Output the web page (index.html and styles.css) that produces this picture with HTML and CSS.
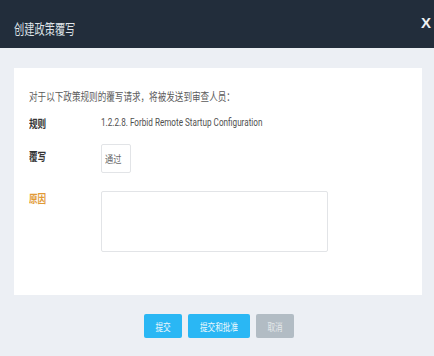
FILE: index.html
```html
<!DOCTYPE html>
<html lang="zh">
<head>
<meta charset="utf-8">
<link rel="stylesheet" href="styles.css">
</head>
<body>
<div class="dialog">
  <header class="head">
    <span class="title sx">创建政策覆写</span>
    <span class="close">X</span>
  </header>
  <main class="body">
    <section class="card">
      <p class="intro"><span class="sx">对于以下政策规则的覆写请求，将被发送到审查人员：</span></p>
      <div class="row row-rule">
        <div class="label"><span class="sx">规则</span></div>
        <div class="value"><span class="sx">1.2.2.8. Forbid Remote Startup Configuration</span></div>
      </div>
      <div class="row row-over">
        <div class="label"><span class="sx">覆写</span></div>
        <div class="select"><span class="sx">通过</span></div>
      </div>
      <div class="row row-reason">
        <div class="label warn"><span class="sx">原因</span></div>
        <div class="textarea"></div>
      </div>
    </section>
    <div class="actions">
      <button class="btn primary w38"><span class="sxc">提交</span></button>
      <button class="btn primary w62"><span class="sxc">提交和批准</span></button>
      <button class="btn muted w38"><span class="sxc">取消</span></button>
    </div>
  </main>
</div>
</body>
</html>
```
FILE: styles.css
```css
* { box-sizing: border-box; }
html, body { margin: 0; padding: 0; }
body {
  width: 434px;
  height: 356px;
  overflow: hidden;
  background: #eceff4;
  font-family: Roboto, "Noto Sans CJK SC", sans-serif;
}
.sx {
  display: inline-block;
  white-space: nowrap;
  transform: scaleX(0.78);
  transform-origin: 0 50%;
}
.sxc {
  display: inline-block;
  white-space: nowrap;
  transform: scaleX(0.76);
  transform-origin: 50% 50%;
}
.head {
  height: 48px;
  background: #222d3b;
  display: flex;
  align-items: center;
  justify-content: space-between;
  padding: 0 3px 0 14px;
  color: #e6e9ee;
  font-family: "Noto Sans CJK SC", sans-serif;
}
.title {
  font-size: 14px;
  transform: scaleX(0.73);
  margin-top: 8px;
  color: #dfe3e8;
}
.close {
  font-size: 15px;
  font-weight: bold;
  color: #eef0f3;
  margin-top: -4px;
  font-family: "Liberation Sans", Arial, sans-serif;
}
.body {
  padding: 20px 12px 0 14px;
}
.card {
  background: #fff;
  padding: 20px 15px 43px 15px;
  width: 408px;
}
.intro {
  margin: 0;
  font-size: 11px;
  line-height: 16px;
  color: #5a5a5a;
  font-family: "Noto Sans CJK SC", sans-serif;
}
.row {
  display: grid;
  grid-template-columns: 72px 1fr;
  align-items: start;
}
.label {
  font-size: 11px;
  line-height: 16px;
  font-weight: bold;
  color: #333;
  font-family: "Noto Sans CJK SC", sans-serif;
}
.label.warn { color: #e19a36; }
.value {
  font-size: 11px;
  line-height: 16px;
  color: #4f4f4f;
}
.value .sx { transform: scaleX(0.74); }
.row-rule { margin-top: 11px; }
.row-over { margin-top: 13px; }
.row-over .label { margin-top: 4px; }
.row-reason { margin-top: 18px; }
.row-reason .label { margin-top: -1px; }
.select {
  width: 30px;
  height: 29px;
  border: 1px solid #e2e4e7;
  border-radius: 2px;
  padding-left: 3px;
  font-size: 10.5px;
  line-height: 27px;
  color: #6a6a6a;
  font-family: "Noto Sans CJK SC", sans-serif;
}
.textarea {
  width: 227px;
  height: 61px;
  border: 1px solid #e2e4e7;
  border-radius: 2px;
  background: #fff;
}
.actions {
  display: flex;
  justify-content: center;
  gap: 6px;
  margin-top: 19px;
  padding-left: 1px;
}
.btn {
  height: 24px;
  border: 0;
  border-radius: 2px;
  padding: 0;
  font-size: 10px;
  color: #eaf7fd;
  font-family: "Noto Sans CJK SC", sans-serif;
}
.primary { background: #2ab7f4; }
.muted { background: #b2bcc4; color: #e4e8eb; }
.w38 { width: 38px; }
.w62 { width: 62px; }
```
